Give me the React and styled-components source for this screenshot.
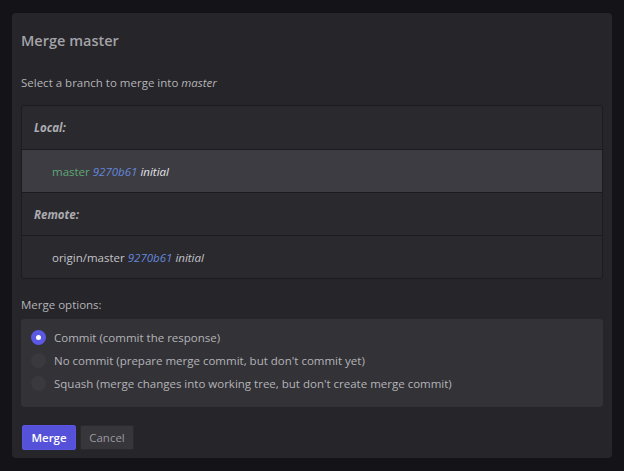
import React, { useState } from 'react';
import styled, { createGlobalStyle } from 'styled-components';

const GlobalStyle = createGlobalStyle`
  html, body {
    margin: 0;
    padding: 0;
    background: #131318;
    font-family: "Open Sans", "Noto Sans", sans-serif;
  }
`;

const Page = styled.div`
  width: 624px;
  height: 471px;
  padding: 13px 12px 0 12px;
  box-sizing: border-box;
`;

const Dialog = styled.div`
  width: 600px;
  height: 445px;
  box-sizing: border-box;
  background: #262529;
  border-radius: 4px;
  padding: 18px 9px 0 9px;
  display: flex;
  flex-direction: column;
`;

const Title = styled.h2`
  margin: 0;
  font-size: 14.5px;
  font-weight: 600;
  color: #a3a3a8;
  line-height: 20px;
`;

const Subtitle = styled.p`
  margin: 23px 0 0 0;
  font-size: 11.5px;
  color: #b4b4b8;
  line-height: 18px;
  em { font-style: italic; }
`;

const BranchList = styled.div`
  margin-top: 13px;
  border: 1px solid #1c1b1f;
  border-radius: 3px;
  overflow: hidden;
  display: flex;
  flex-direction: column;
`;

const Row = styled.div`
  height: 43px;
  box-sizing: border-box;
  display: flex;
  align-items: center;
  padding-left: ${(p) => (p.$header ? '12px' : '30px')};
  background: ${(p) => (p.$selected ? '#3d3c42' : '#2a292e')};
  border-top: ${(p) => (p.$first ? 'none' : '1px solid #1c1b1f')};
  font-size: 11.5px;
  color: #c8c8cc;
`;

const GroupLabel = styled.span`
  font-style: italic;
  font-weight: 700;
  color: #acacb1;
`;

const BranchName = styled.span`
  color: ${(p) => (p.$current ? '#5fa878' : '#c4c4c8')};
`;

const Hash = styled.span`
  color: #6488dc;
  font-style: italic;
  margin-left: 3px;
`;

const Message = styled.span`
  color: ${(p) => (p.$bright ? '#e4e4e8' : '#c4c4c8')};
  font-style: italic;
  margin-left: 3px;
`;

const OptionsLabel = styled.div`
  margin-top: 17px;
  font-size: 11.5px;
  color: #b4b4b8;
  line-height: 18px;
`;

const OptionsBox = styled.div`
  margin-top: 5px;
  background: #333237;
  border-radius: 3px;
  padding: 11px 10px 16px 10px;
  display: flex;
  flex-direction: column;
  gap: 8px;
`;

const Option = styled.label`
  display: flex;
  align-items: center;
  gap: 8px;
  font-size: 11.5px;
  color: #b4b4b8;
  line-height: 15px;
  cursor: pointer;
`;

const Radio = styled.span`
  width: 15px;
  height: 15px;
  border-radius: 50%;
  flex-shrink: 0;
  background: ${(p) => (p.$checked ? '#5b58e3' : '#3a393e')};
  display: flex;
  align-items: center;
  justify-content: center;
  &::after {
    content: '';
    width: 5px;
    height: 5px;
    border-radius: 50%;
    background: #ffffff;
    display: ${(p) => (p.$checked ? 'block' : 'none')};
  }
`;

const Buttons = styled.div`
  margin-top: 18px;
  display: flex;
  gap: 4px;
  padding-left: 1px;
`;

const Button = styled.button`
  height: 25px;
  width: 54px;
  padding: 0;
  border-radius: 2px;
  font-family: inherit;
  font-size: 11.5px;
  cursor: pointer;
  border: 1px solid ${(p) => (p.$primary ? '#5a55e0' : '#2b2a2f')};
  background: ${(p) => (p.$primary ? '#5551d8' : '#37363b')};
  color: ${(p) => (p.$primary ? '#ffffff' : '#9a9a9f')};
  font-weight: ${(p) => (p.$primary ? 600 : 400)};
`;

const options = [
  'Commit (commit the response)',
  "No commit (prepare merge commit, but don't commit yet)",
  "Squash (merge changes into working tree, but don't create merge commit)",
];

export default function App() {
  const [choice, setChoice] = useState(0);

  return (
    <>
      <GlobalStyle />
      <Page>
        <Dialog>
          <Title>Merge master</Title>
          <Subtitle>
            Select a branch to merge into <em>master</em>
          </Subtitle>
          <BranchList>
            <Row $header $first>
              <GroupLabel>Local:</GroupLabel>
            </Row>
            <Row $selected>
              <BranchName $current>master</BranchName>
              <Hash>9270b61</Hash>
              <Message $bright>initial</Message>
            </Row>
            <Row $header>
              <GroupLabel>Remote:</GroupLabel>
            </Row>
            <Row>
              <BranchName>origin/master</BranchName>
              <Hash>9270b61</Hash>
              <Message>initial</Message>
            </Row>
          </BranchList>
          <OptionsLabel>Merge options:</OptionsLabel>
          <OptionsBox>
            {options.map((text, i) => (
              <Option key={i} onClick={() => setChoice(i)}>
                <Radio $checked={choice === i} />
                {text}
              </Option>
            ))}
          </OptionsBox>
          <Buttons>
            <Button $primary>Merge</Button>
            <Button>Cancel</Button>
          </Buttons>
        </Dialog>
      </Page>
    </>
  );
}
